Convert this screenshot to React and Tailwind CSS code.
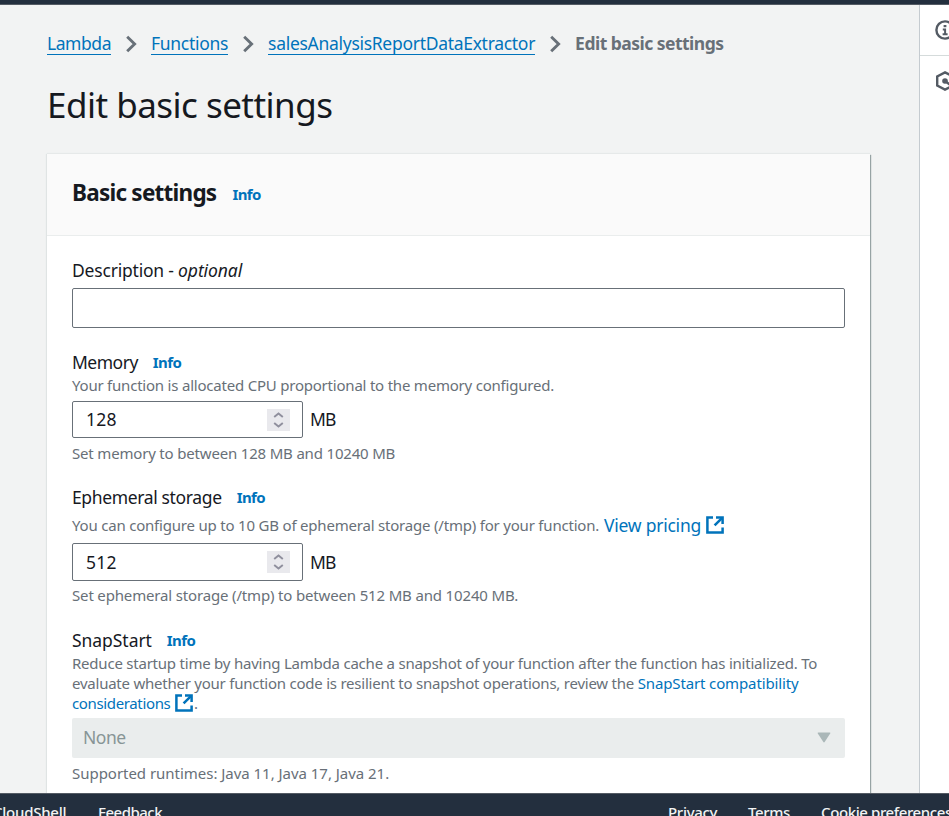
import React from "react";

function Chevron() {
  return (
    <svg className="h-[18px] w-[11px] shrink-0" viewBox="0 0 11 18" fill="none" stroke="#687078" strokeWidth="2.9">
      <path d="M1.2 1.8 L8.6 9 L1.2 16.2" />
    </svg>
  );
}

function External({ className }) {
  return (
    <svg className={`h-[18px] w-[18px] shrink-0 ${className}`} viewBox="0 0 18 18" fill="none" stroke="#0073bb" strokeWidth="2.5">
      <path d="M7 1.4 H1.4 V16.6 H16.6 V11.5" />
      <path d="M10 1.4 H16.6 V8" />
      <path d="M16.2 1.8 L8.6 9.4" />
    </svg>
  );
}

function Crumb({ className, children }) {
  return <a className={`h-[22px] border-b border-[#0073bb] leading-[21px] text-[#0073bb] ${className}`}>{children}</a>;
}

function Label({ className, children }) {
  return (
    <div className="flex h-[22px] gap-[15px] text-[17.5px]">
      <span className={`leading-[24px] ${className}`}>{children}</span>
      <Info />
    </div>
  );
}

function Info() {
  return <a className="pt-px text-[15px] leading-[22px] font-bold tracking-[-0.6px] text-[#0073bb]">Info</a>;
}

function NumberField({ value, className }) {
  return (
    <div className="flex items-center gap-[7px] text-[17.5px]">
      <div className={`flex w-[231px] items-center justify-between rounded-[2px] border border-[#687078] pr-3 pl-[13px] ${className}`}>
        <span className="leading-[25px] tracking-[0.25px]">{value}</span>
        <span className="flex h-[22px] w-[23px] items-center justify-center bg-[#e9e9ed]">
          <svg className="h-4 w-[11px]" viewBox="0 0 11 16" fill="none" stroke="#8f8f9d" strokeWidth="1.9">
            <path d="M1.2 5 L5.5 1.4 L9.8 5 M1.2 11 L5.5 14.6 L9.8 11" />
          </svg>
        </span>
      </div>
      <span className="leading-[25px] tracking-[-0.9px]">MB</span>
    </div>
  );
}

function Hint({ className, children }) {
  return <p className={`h-5 text-[15px] leading-5 text-[#687078] ${className}`}>{children}</p>;
}

export default function App() {
  return (
    <div className="flex h-[816px] w-[949px] flex-col overflow-hidden bg-[#f2f3f3] font-['Noto_Sans','Open_Sans',sans-serif] whitespace-nowrap text-[#16191f]">
      <header className="h-[5px] shrink-0 border-b border-[#545b64] bg-[#232f3e]" />
      <div className="flex h-[788px] shrink-0 overflow-hidden">
        <main className="w-[919px] shrink-0 pt-[28px] pl-[47px]">
          <nav className="flex h-[22px] items-center text-[17.5px]">
            <Crumb className="tracking-[-0.44px]">Lambda</Crumb>
            <div className="flex w-[40px] justify-center"><Chevron /></div>
            <Crumb className="tracking-[-0.3px]">Functions</Crumb>
            <div className="flex w-[40px] justify-center"><Chevron /></div>
            <Crumb className="tracking-[-0.294px]">salesAnalysisReportDataExtractor</Crumb>
            <div className="flex w-[40px] justify-center"><Chevron /></div>
            <span className="h-[22px] leading-[21px] font-bold tracking-[-0.52px] text-[#687078]">Edit basic settings</span>
          </nav>
          <h1 className="mt-[27px] h-[45px] text-[35px] leading-[45px] tracking-[-0.52px]">Edit basic settings</h1>

          <section className="mt-[27px] h-[720px] w-[823px] bg-white shadow-[0_-1px_1px_0_#e6e9e9,1px_1px_1px_0_#879596,-1px_0_1px_0_#dfe3e3]">
            <div className="flex h-[82px] gap-4 border-b border-[#eaeded] bg-[#fafafa] pt-[22px] pl-[25px]">
              <h2 className="pt-px text-[22.5px] leading-[32px] font-bold tracking-[-0.76px]">Basic settings</h2>
              <div className="pt-[7px] leading-[22px]"><Info /></div>
            </div>

            <div className="px-[25px] pt-[22px]">
              <div className="h-[22px] text-[17.5px] leading-[24px] tracking-[-0.2px]">
                Description - <i className="tracking-[-0.1px]">optional</i>
              </div>
              <div className="mt-[8px] h-10 w-[773px] rounded-[2px] border border-[#687078]" />

              <div className="mt-[22px]"><Label className="tracking-[-0.5px]">Memory</Label></div>
              <Hint className="mt-[3px] tracking-[-0.214px]">Your function is allocated CPU proportional to the memory configured.</Hint>
              <div className="mt-[6px]"><NumberField value="128" className="h-[37px]" /></div>
              <Hint className="mt-[5px] tracking-[-0.18px]">Set memory to between 128 MB and 10240 MB</Hint>

              <div className="mt-[22px]"><Label className="tracking-[-0.36px]">Ephemeral storage</Label></div>
              <div className="mt-[7px] flex h-[22px] text-[15px] leading-[22px]">
                <span className="w-[532px] tracking-[-0.2px] text-[#687078]">You can configure up to 10 GB of ephemeral storage (/tmp) for your function.</span>
                <a className="flex w-[120px] justify-between text-[17.5px] leading-[22px] tracking-[-0.236px] text-[#0073bb]">
                  View pricing
                  <External className="mt-[2px]" />
                </a>
              </div>
              <div className="mt-[7px]"><NumberField value="512" className="h-[38px]" /></div>
              <Hint className="mt-[4px] tracking-[-0.16px]">Set ephemeral storage (/tmp) to between 512 MB and 10240 MB.</Hint>

              <div className="mt-[23px]"><Label className="tracking-[-0.05px]">SnapStart</Label></div>
              <div className="mt-[3px]">
                <Hint className="tracking-[-0.222px]">Reduce startup time by having Lambda cache a snapshot of your function after the function has initialized. To</Hint>
                <Hint className="tracking-[-0.235px]">
                  evaluate whether your function code is resilient to snapshot operations, review the{" "}
                  <a className="tracking-[-0.13px] text-[#0073bb]">SnapStart compatibility</a>
                </Hint>
                <Hint className="flex">
                  <a className="flex w-[121px] justify-between tracking-[-0.36px] text-[#0073bb]">
                    considerations
                    <External className="mt-px" />
                  </a>
                  <span className="pl-px">.</span>
                </Hint>
              </div>
              <div className="mt-[5px] flex h-10 w-[773px] items-center justify-between rounded-[2px] bg-[#eaeded] pr-[14px] pb-px pl-[11px] text-[17.5px] text-[#879596]">
                <span className="leading-[25px] tracking-[-0.45px]">None</span>
                <svg className="h-[11px] w-[14px]" viewBox="0 0 14 11" fill="#aab7b8">
                  <path d="M1.3 .5 H12.7 Q13.8 .5 13.2 1.5 L7.8 9.8 Q7 11 6.2 9.8 L.8 1.5 Q.2 .5 1.3 .5Z" />
                </svg>
              </div>
              <Hint className="mt-[5px] tracking-[-0.03px]">Supported runtimes: Java 11, Java 17, Java 21.</Hint>
            </div>
          </section>
        </main>

        <aside className="w-[30px] shrink-0 overflow-hidden border-l border-[#c5cbd0] bg-white">
          <div className="h-[51px] border-b border-[#d5dbdb] pt-[15px] pl-[15px]">
            <svg className="h-5 w-5" viewBox="0 0 20 20" fill="none" stroke="#545b64" strokeWidth="2.4">
              <circle cx="10" cy="10" r="8.6" />
              <path d="M10 5 V7.2" strokeWidth="2.8" />
              <path d="M7.8 9.6 H10.1 V14.2 M7.6 14.2 H12.6" strokeWidth="2" />
            </svg>
          </div>
          <div className="pt-[15px] pl-[15px]">
            <svg className="h-5 w-5" viewBox="0 0 20 20" fill="none" stroke="#545b64" strokeWidth="2.4">
              <path d="M10 1.4 L17.8 5.4 V14.6 L10 18.6 L2.2 14.6 V5.4 Z" />
              <circle cx="10" cy="10" r="2.8" fill="#545b64" stroke="none" />
              <path d="M10 10 L16 14.4" />
            </svg>
          </div>
        </aside>
      </div>

      <footer className="flex h-[23px] shrink-0 overflow-hidden border-t border-[#545b64] bg-[#232f3e] pt-[7px] text-[15px] leading-[22px] font-medium text-[#f2f3f3]">
        <span className="-ml-[7px] w-[105px] shrink-0 tracking-[-0.25px]">CloudShell</span>
        <span className="w-[570px] shrink-0 tracking-[-0.5px]">Feedback</span>
        <span className="w-[80px] shrink-0 tracking-[-0.3px]">Privacy</span>
        <span className="w-[73px] shrink-0 tracking-[-0.4px]">Terms</span>
        <span className="shrink-0 tracking-[-0.4px]">Cookie preferences</span>
      </footer>
    </div>
  );
}
